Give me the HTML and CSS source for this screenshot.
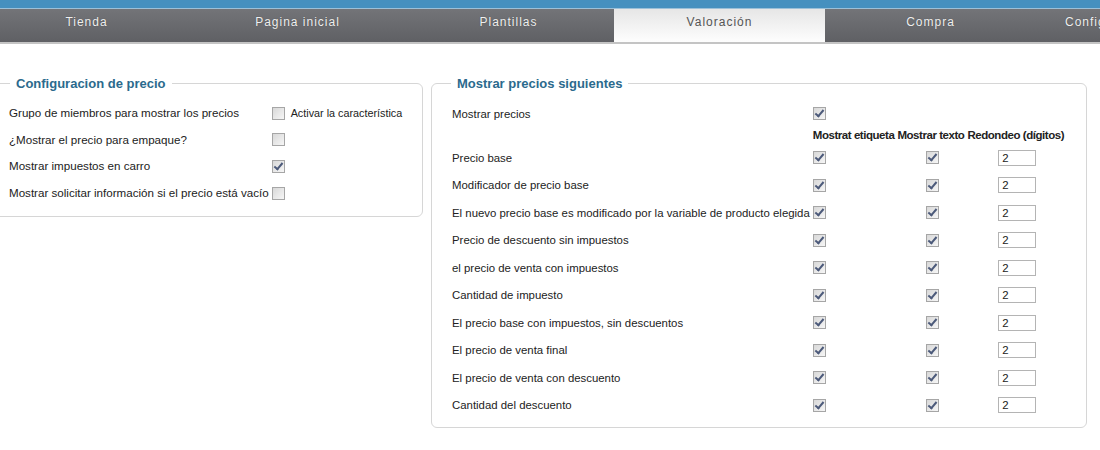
FILE: index.html
```html
<!DOCTYPE html>
<html lang="es">
<head>
    <meta charset="UTF-8">
    <title>Valoración</title>
    <link rel="stylesheet" href="styles.css">
</head>
<body>
    <div class="topbar"></div>
    <div class="tabs">
        <div class="tab">Tienda</div>
        <div class="tab">Pagina inicial</div>
        <div class="tab">Plantillas</div>
        <div class="tab active">Valoración</div>
        <div class="tab">Compra</div>
        <div class="tab last">Configuración</div>
    </div>

    <div class="panels">
        <!-- Configuracion de precio -->
        <fieldset class="box left-box">
            <legend>Configuracion de precio</legend>
            <table class="opts">
                <tr>
                    <td>Grupo de miembros para mostrar los precios</td>
                    <td><span class="cb"></span><span class="note">Activar la característica</span></td>
                </tr>
                <tr>
                    <td>¿Mostrar el precio para empaque?</td>
                    <td><span class="cb"></span></td>
                </tr>
                <tr>
                    <td>Mostrar impuestos en carro</td>
                    <td><span class="cb on"></span></td>
                </tr>
                <tr>
                    <td>Mostrar solicitar información si el precio está vacío</td>
                    <td><span class="cb"></span></td>
                </tr>
            </table>
        </fieldset>

        <!-- Mostrar precios siguientes -->
        <fieldset class="box right-box">
            <legend>Mostrar precios siguientes</legend>
            <table class="prices">
                <tr class="first">
                    <td class="label">Mostrar precios</td>
                    <td><span class="cb on"></span></td>
                    <td></td>
                    <td></td>
                </tr>
                <tr class="head">
                    <td></td>
                    <td>Mostrat etiqueta</td>
                    <td>Mostrar texto</td>
                    <td>Redondeo (dígitos)</td>
                </tr>
                <tr>
                    <td class="label">Precio base</td>
                    <td><span class="cb on"></span></td>
                    <td class="mid"><span class="cb on"></span></td>
                    <td class="mid"><span class="num">2</span></td>
                </tr>
                <tr>
                    <td class="label">Modificador de precio base</td>
                    <td><span class="cb on"></span></td>
                    <td class="mid"><span class="cb on"></span></td>
                    <td class="mid"><span class="num">2</span></td>
                </tr>
                <tr>
                    <td class="label">El nuevo precio base es modificado por la variable de producto elegida</td>
                    <td><span class="cb on"></span></td>
                    <td class="mid"><span class="cb on"></span></td>
                    <td class="mid"><span class="num">2</span></td>
                </tr>
                <tr>
                    <td class="label">Precio de descuento sin impuestos</td>
                    <td><span class="cb on"></span></td>
                    <td class="mid"><span class="cb on"></span></td>
                    <td class="mid"><span class="num">2</span></td>
                </tr>
                <tr>
                    <td class="label">el precio de venta con impuestos</td>
                    <td><span class="cb on"></span></td>
                    <td class="mid"><span class="cb on"></span></td>
                    <td class="mid"><span class="num">2</span></td>
                </tr>
                <tr>
                    <td class="label">Cantidad de impuesto</td>
                    <td><span class="cb on"></span></td>
                    <td class="mid"><span class="cb on"></span></td>
                    <td class="mid"><span class="num">2</span></td>
                </tr>
                <tr>
                    <td class="label">El precio base con impuestos, sin descuentos</td>
                    <td><span class="cb on"></span></td>
                    <td class="mid"><span class="cb on"></span></td>
                    <td class="mid"><span class="num">2</span></td>
                </tr>
                <tr>
                    <td class="label">El precio de venta final</td>
                    <td><span class="cb on"></span></td>
                    <td class="mid"><span class="cb on"></span></td>
                    <td class="mid"><span class="num">2</span></td>
                </tr>
                <tr>
                    <td class="label">El precio de venta con descuento</td>
                    <td><span class="cb on"></span></td>
                    <td class="mid"><span class="cb on"></span></td>
                    <td class="mid"><span class="num">2</span></td>
                </tr>
                <tr>
                    <td class="label">Cantidad del descuento</td>
                    <td><span class="cb on"></span></td>
                    <td class="mid"><span class="cb on"></span></td>
                    <td class="mid"><span class="num">2</span></td>
                </tr>
            </table>
        </fieldset>
    </div>
</body>
</html>
```

FILE: styles.css
```css
body {
    margin: 0;
    font-family: "Liberation Sans", Arial, sans-serif;
    font-size: 12px;
    color: #222;
    background: #fff;
    overflow: hidden;
}

.topbar {
    height: 8px;
    background: #4690bf;
    border-bottom: 1px solid #9cc0d8;
}

.tabs {
    display: flex;
    height: 33px;
    margin-left: -19px;
    background: linear-gradient(#737478, #5f6064);
    border-bottom: 2px solid #c4c4c4;
    overflow: hidden;
}

.tab {
    flex: 0 0 211px;
    text-align: center;
    padding-top: 6px;
    color: #f0f0f0;
    letter-spacing: 1px;
    font-size: 12px;
    text-shadow: 0 0 1px rgba(0, 0, 0, 0.4);
    white-space: nowrap;
}

.tab.last {
    text-align: left;
    padding-left: 29px;
}

.tab.active {
    background: linear-gradient(#e6e6e6, #fff);
    color: #555;
    text-shadow: none;
    height: 29px;
}

.panels {
    display: flex;
    align-items: flex-start;
    margin: 32px 0 0 -10px;
    gap: 8px;
}

.box {
    flex: none;
    margin: 0;
    padding: 8px 0 10px 18px;
    border: 1px solid #d6d6d6;
    border-radius: 6px;
    box-sizing: border-box;
}

.box legend {
    padding: 0 6px;
    margin-left: 1px;
    color: #2b6a8d;
    font-size: 13px;
    font-weight: bold;
}

.left-box {
    width: 433px;
}

.right-box {
    width: 656px;
    padding: 11px 0 8px 20px;
}

.right-box legend {
    margin-left: -1px;
}

table {
    border-collapse: collapse;
}

td {
    padding: 0;
    vertical-align: middle;
    white-space: nowrap;
}

.opts {
    font-size: 11.6px;
}

.opts td {
    height: 26.7px;
}

.opts td:first-child {
    padding-right: 3px;
}

.note {
    margin-left: 6px;
    font-size: 10.8px;
    vertical-align: middle;
}

.prices {
    font-size: 11.4px;
}

.prices td {
    height: 27.5px;
}

.prices .label {
    padding-right: 3px;
}

.prices .first td {
    height: 23.5px;
}

.prices .head td {
    height: 18.5px;
    font-weight: bold;
    font-size: 11.5px;
    letter-spacing: -0.45px;
    padding-right: 3px;
}

.prices .mid {
    text-align: center;
}

.cb {
    display: inline-block;
    width: 11px;
    height: 11px;
    border: 1px solid #a6a6a6;
    background: linear-gradient(135deg, #d8d8d8, #f6f6f6);
    vertical-align: middle;
    position: relative;
}

.cb.on::after {
    content: "";
    position: absolute;
    left: 3px;
    top: 0px;
    width: 3px;
    height: 7px;
    border: solid #4c5a7a;
    border-width: 0 2px 2px 0;
    transform: rotate(40deg);
}

.num {
    display: inline-block;
    width: 33px;
    height: 14px;
    line-height: 14px;
    padding-left: 3px;
    border: 1px solid #b4b4b4;
    text-align: left;
    vertical-align: middle;
    background: #fff;
}
```
